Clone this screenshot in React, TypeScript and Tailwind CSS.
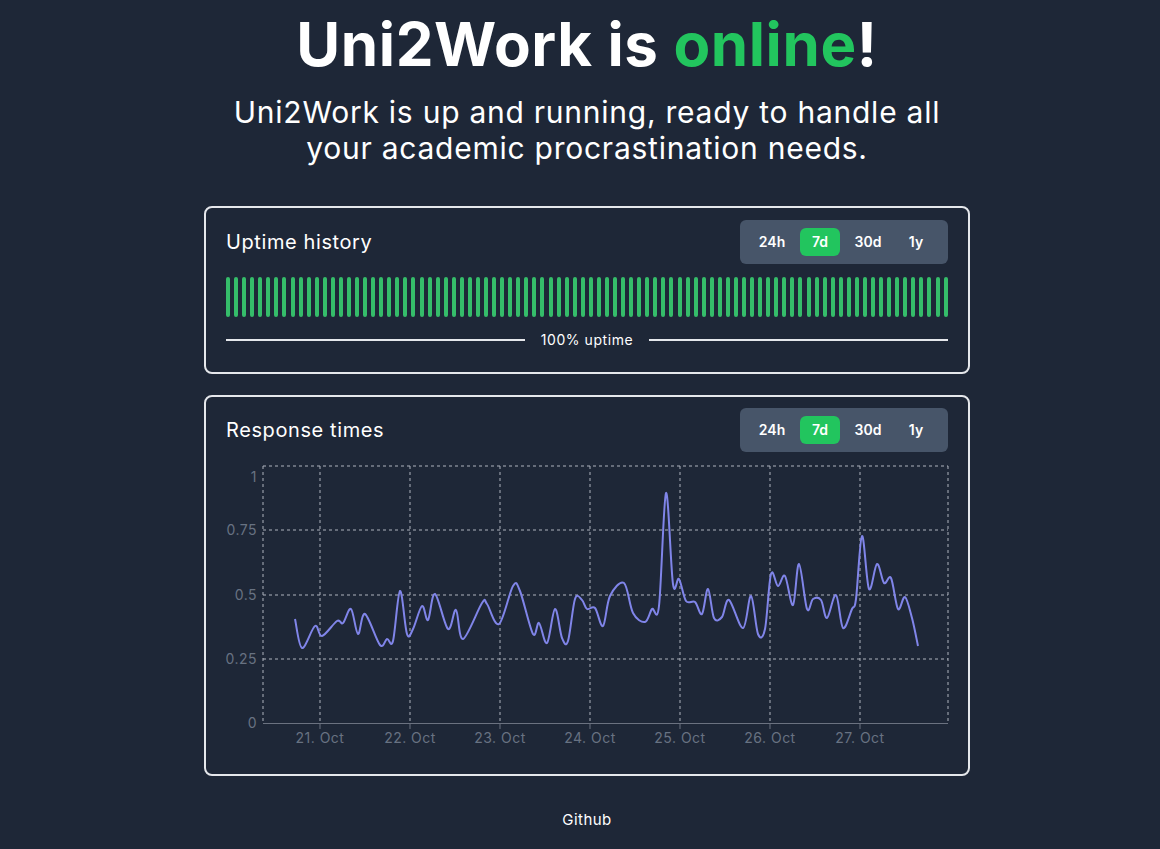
import React from 'react';

const FONT = { fontFamily: 'Inter, "Open Sans", sans-serif' };

const RANGES = ['24h', '7d', '30d', '1y'];

// traced response time curve, in page coordinates
const POINTS: [number, number][] = [
  [295, 618], [302, 647], [315, 625], [322, 635], [337, 620], [343, 622], [351, 608], [358, 633],
  [365, 613], [380, 644], [387, 638], [393, 640], [400, 590], [407, 633], [413, 628], [422, 605],
  [428, 619], [435, 593], [448, 628], [456, 609], [463, 638], [482, 602], [487, 603], [499, 623],
  [513, 585], [520, 590], [533, 633], [539, 622], [547, 642], [555, 608], [562, 637], [568, 640],
  [575, 598], [582, 599], [587, 608], [595, 607], [603, 625], [610, 595], [624, 582], [633, 612],
  [645, 621], [652, 608], [659, 605], [666, 492], [673, 583], [679, 578], [686, 600], [695, 601],
  [702, 613], [708, 588], [714, 617], [722, 616], [729, 599], [743, 627], [751, 595], [758, 633],
  [765, 628], [771, 573], [778, 585], [785, 575], [793, 604], [799, 563], [807, 608], [813, 598],
  [821, 599], [827, 617], [836, 594], [843, 627], [852, 608], [856, 598], [862, 535], [869, 588],
  [877, 563], [884, 582], [891, 577], [898, 608], [905, 596], [912, 617], [918, 645],
];

function spline(pts: [number, number][]) {
  let d = `M${pts[0][0]},${pts[0][1]}`;
  for (let i = 0; i < pts.length - 1; i++) {
    const p0 = pts[i - 1] ?? pts[i];
    const p1 = pts[i];
    const p2 = pts[i + 1];
    const p3 = pts[i + 2] ?? p2;
    const c1x = p1[0] + (p2[0] - p0[0]) / 6;
    const c1y = p1[1] + (p2[1] - p0[1]) / 6;
    const c2x = p2[0] - (p3[0] - p1[0]) / 6;
    const c2y = p2[1] - (p3[1] - p1[1]) / 6;
    d += ` C${c1x.toFixed(1)},${c1y.toFixed(1)} ${c2x.toFixed(1)},${c2y.toFixed(1)} ${p2[0]},${p2[1]}`;
  }
  return d;
}

function RangePicker() {
  return (
    <div className="flex gap-2 rounded-md bg-[#475569] px-3 py-2">
      {RANGES.map((r) => (
        <button
          key={r}
          className={
            r === '7d'
              ? 'h-7 w-10 rounded-md bg-[#22c55e] text-sm font-semibold text-white'
              : 'h-7 w-10 rounded-md text-sm font-semibold text-white'
          }
        >
          {r}
        </button>
      ))}
    </div>
  );
}

function Card({ title, top, children }: { title: string; top: string; children: React.ReactNode }) {
  return (
    <div className={`w-[766px] rounded-lg border-2 border-[#e5e7eb] bg-[#1e2737] px-5 ${top}`}>
      <div className="flex items-center justify-between">
        <h2 className="text-xl leading-7 tracking-[0.03em] text-white">{title}</h2>
        <RangePicker />
      </div>
      {children}
    </div>
  );
}

function ResponseChart() {
  const gridY = [465, 529, 594, 658];
  const yLabels: [string, number][] = [['1', 476], ['0.75', 529], ['0.5', 594], ['0.25', 658], ['0', 722]];
  const days = [320, 410, 500, 590, 680, 770, 860];
  const dayLabels = ['21. Oct', '22. Oct', '23. Oct', '24. Oct', '25. Oct', '26. Oct', '27. Oct'];
  return (
    <svg width="724" height="300" className="block" style={{ ...FONT, letterSpacing: '0.03em' }}>
      <g transform="translate(-226,-451)">
        {gridY.map((y) => (
          <line key={y} x1={263} x2={948} y1={y} y2={y} stroke="#aeb4be" strokeWidth={1} strokeDasharray="3 3" />
        ))}
        {[263, ...days, 948].map((x) => (
          <line key={x} x1={x} x2={x} y1={465} y2={722} stroke="#aeb4be" strokeWidth={1} strokeDasharray="3 3" />
        ))}
        <line x1={263} x2={948} y1={722.5} y2={722.5} stroke="#6b7280" strokeWidth={1} />
        {days.map((x) => (
          <line key={x} x1={x} x2={x} y1={722} y2={728} stroke="#6b7280" strokeWidth={1} />
        ))}
        {yLabels.map(([t, y]) => (
          <text key={t} x={257} y={y + 5} textAnchor="end" fontSize={14} fill="#687282">
            {t}
          </text>
        ))}
        {days.map((x, i) => (
          <text key={x} x={x} y={742} textAnchor="middle" fontSize={14} fill="#687282">
            {dayLabels[i]}
          </text>
        ))}
        <path d={spline(POINTS)} fill="none" stroke="#8085e9" strokeWidth={2} strokeLinejoin="round" />
      </g>
    </svg>
  );
}

export default function App() {
  return (
    <div className="flex min-h-screen flex-col items-center bg-[#1e2737] pl-[14px] pt-[14px] text-white" style={FONT}>
      <h1 className="text-6xl font-bold leading-[60px] tracking-[0.01em] text-white">
        Uni2Work is <span className="text-[#22c55e]">online</span>!
      </h1>
      <p className="mt-5 w-[740px] text-center text-3xl leading-9 tracking-[0.025em] text-white">
        Uni2Work is up and running, ready to handle all your academic procrastination needs.
      </p>

      <div className="mt-[40px]">
        <Card title="Uptime history" top="pt-[12px]">
          <div className="mt-[13px] flex h-10 justify-between">
            {Array.from({ length: 90 }).map((_, i) => (
              <div key={i} className="h-full w-1 rounded-full bg-[#35bd6a]" />
            ))}
          </div>
          <div className="mt-[13px] flex items-center gap-4 pb-[22px]">
            <div className="h-[2px] flex-1 bg-[#e5e7eb]" />
            <span className="text-sm leading-5 tracking-[0.04em] text-white">100% uptime</span>
            <div className="h-[2px] flex-1 bg-[#e5e7eb]" />
          </div>
        </Card>
      </div>

      <div className="mt-[21px]">
        <Card title="Response times" top="pt-[11px]">
          <div className="pb-[22px]">
            <ResponseChart />
          </div>
        </Card>
      </div>

      <a className="mt-[34px] text-[15px] leading-5 tracking-[0.03em] text-white">Github</a>
    </div>
  );
}
